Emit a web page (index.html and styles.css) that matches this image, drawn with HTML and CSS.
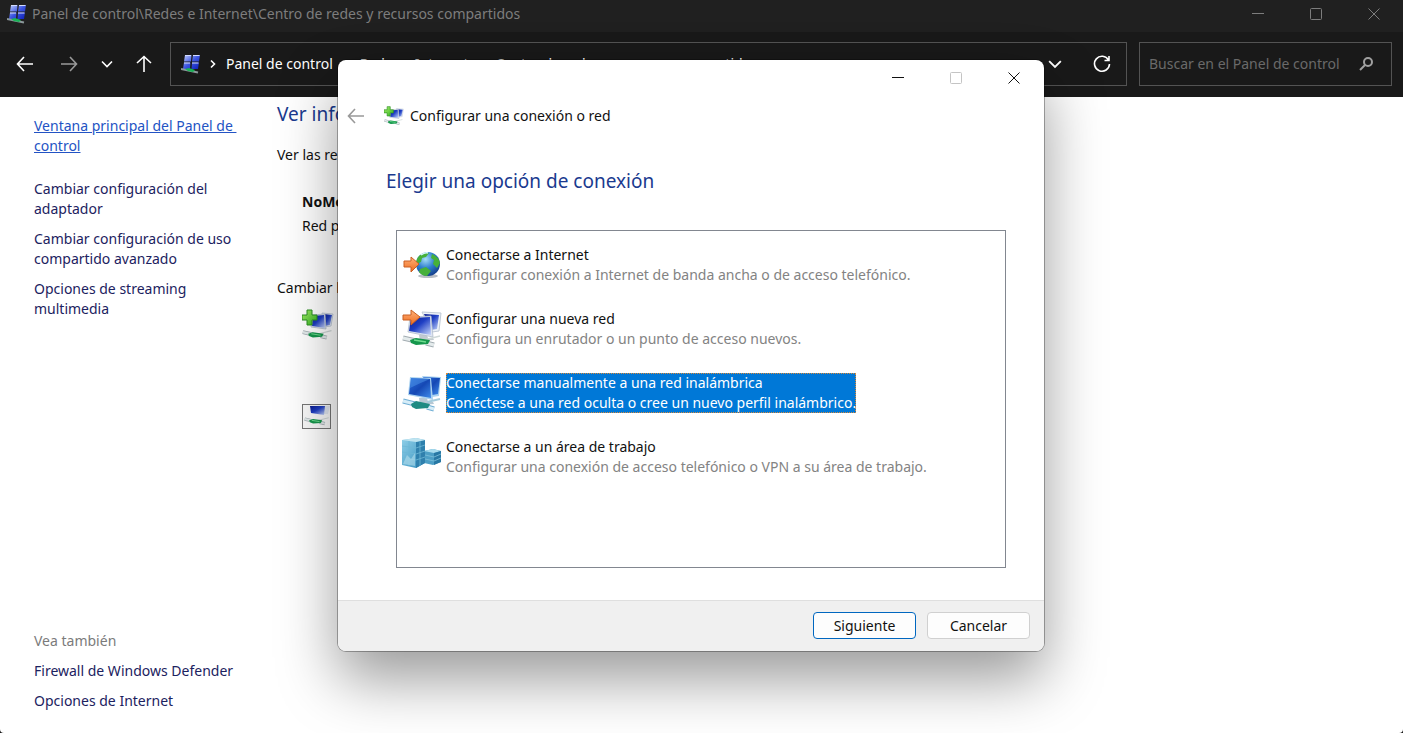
FILE: index.html
```html
<!DOCTYPE html>
<html lang="es">
<head>
<meta charset="utf-8">
<meta name="viewport" content="width=device-width, initial-scale=1">
<title>Centro de redes y recursos compartidos</title>
<link rel="stylesheet" href="styles.css">
</head>
<body>
<svg class="defs" width="0" height="0" aria-hidden="true">
  <defs>
    <linearGradient id="screen" x1="0" y1="0" x2="1" y2="1">
      <stop offset="0" stop-color="#0a1a8c"/><stop offset=".45" stop-color="#1f3fc4"/><stop offset="1" stop-color="#c9d8fb"/>
    </linearGradient>
    <linearGradient id="screen-flat" x1="0" y1="0" x2="1" y2="1">
      <stop offset="0" stop-color="#2c6fdc"/><stop offset=".5" stop-color="#1548b4"/><stop offset="1" stop-color="#3f8bea"/>
    </linearGradient>
    <linearGradient id="orange" x1="0" y1="0" x2="0" y2="1">
      <stop offset="0" stop-color="#ffb27a"/><stop offset="1" stop-color="#ee6a1c"/>
    </linearGradient>
    <linearGradient id="plus-fill" x1="0" y1="0" x2="1" y2="1">
      <stop offset="0" stop-color="#a8ef6c"/><stop offset="1" stop-color="#2fb21c"/>
    </linearGradient>
    <linearGradient id="pane" x1="0" y1="0" x2="1" y2="1">
      <stop offset="0" stop-color="#c4d2ff"/><stop offset=".5" stop-color="#3c55e0"/><stop offset="1" stop-color="#0a1cb4"/>
    </linearGradient>
    <radialGradient id="sea" cx=".4" cy=".3" r=".75">
      <stop offset="0" stop-color="#a5def8"/><stop offset=".5" stop-color="#2f7fd0"/><stop offset="1" stop-color="#123a86"/>
    </radialGradient>
    <linearGradient id="server" x1="0" y1="0" x2="1" y2="1">
      <stop offset="0" stop-color="#8fcfe8"/><stop offset="1" stop-color="#3590be"/>
    </linearGradient>
    <symbol id="cable" viewBox="0 0 40 14">
      <path d="M1 4 14 7 M24 9 32 11" stroke="#a3adb2" stroke-width="5"/>
      <path d="M1 4 14 7 M24 9 32 11" stroke="#e4ebec" stroke-width="3"/>
      <path d="M22 6 38 2" fill="none" stroke="#cfd8d8" stroke-width="1.5"/>
      <path d="M8 6 14 4 28 6 26 10 14 11 9 9z" fill="#15974c"/>
      <path d="M12 6 24 8" fill="none" stroke="#6fdc8f" stroke-width="1.500"/>
    </symbol>
    <symbol id="monitors" viewBox="0 0 40 40">
      <path d="M20 3 39 4 37 22 30 23z" fill="#edf2f8" stroke="#c0cad6"/>
      <path d="M22 5 37 6 35 20 29 21z" fill="url(#screen)"/>
      <path d="M17 26h8l1 3h5l1 2-14 1z" fill="#c2cad0"/>
      <path d="M8 8 29 7 31 28 6 23z" fill="#dfe6f2" stroke="#b0bccb" stroke-width=".8"/>
      <path d="M9 9 28 8 29 26 7 22z" fill="url(#screen)"/>
      <use href="#cable" x="0" y="25" width="40" height="14"/>
    </symbol>
    <symbol id="monitors-wireless" viewBox="0 0 40 40">
      <path d="M20 3 39 4 37 23 30 24z" fill="#a9d2f0"/>
      <path d="M21 4 38 5 36 21 30 22z" fill="url(#screen-flat)"/>
      <path d="M17 25h8l1 4h5l1 2-14 1z" fill="#b6c8d4"/>
      <path d="M8 4 29 5 31 27 6 22z" fill="#a9d2f0"/>
      <path d="M9 5 28 6 29 25 7 21z" fill="url(#screen-flat)"/>
      <path d="M9 5 28 6 Q18 10 8 15z" fill="#4f97ea" opacity=".5"/>
      <path d="M25 29 38 26" stroke="#a4cbdc" stroke-width="2"/>
      <path d="M1 28 13 31 M25 34 32 36" stroke="#6faed4" stroke-width="5"/>
      <path d="M1 28 13 31 M25 34 32 36" stroke="#d6edf8" stroke-width="3"/>
      <path d="M9 31 14 28 28 31 26 35 14 36 10 34z" fill="#1f8b83"/>
    </symbol>
    <symbol id="add-network" viewBox="0 0 32 32">
      <path d="M20 4 31 5 29 17 22 18z" fill="#edf2fa" stroke="#b8c4d4" stroke-width=".8"/>
      <path d="M22 5 30 6 28 16 23 17z" fill="url(#screen)"/>
      <path d="M10 6 23 5 24 20 9 18z" fill="#dfe6f2" stroke="#b0bccb" stroke-width=".8"/>
      <path d="M11 7 22 6 23 19 10 17z" fill="url(#screen)"/>
      <use href="#cable" x="0" y="20" width="31" height="11"/>
      <path d="M5 1h5v5h5v5h-5v5H5v-5H0V6h5z" fill="url(#plus-fill)" stroke="#2c8f22"/>
    </symbol>
    <symbol id="network-small" viewBox="0 0 20 20">
      <path d="M4 1H10.500L10 7.500H3z M12 1H19L18 7.500H11z M3 8.500H9.500L9 15H2z M11 8.500H18L17 15H10.500z" fill="url(#pane)"/>
      <path d="M4 1.500H10 M12 1.500H18.500 M3 9H9 M11 9H17.500" stroke="#d3dcff"/>
      <path d="M0 15 17 18.500" stroke="#8b989b" stroke-width="2"/>
      <path d="M4 15 8 14 14 16 12 18 7 17z" fill="#18b256"/>
    </symbol>
    <symbol id="globe" viewBox="0 0 40 40">
      <ellipse cx="26" cy="31" rx="10" ry="2" fill="#b9bec4"/>
      <circle cx="26" cy="19" r="12" fill="url(#sea)"/>
      <path d="M17 11q5-5 10-3l-3 4-4 1-1 4-5 2q0-5 3-8z M30 9q7 3 8 9l-3 5-4-4 1-4-3-2z M18 24l6-2 5 4-4 5q-5 0-8-4z" fill="#46b03a"/>
      <path d="M19 10q4-3 7-2" stroke="#d5f5ff" stroke-width="1.500" fill="none"/>
      <path d="M2 16h7v-4l8 7-8 8v-5H2z" fill="url(#orange)" stroke="#c95f22"/>
    </symbol>
    <symbol id="new-network" viewBox="0 0 40 40">
      <use href="#monitors" width="40" height="40"/>
      <path d="M1 6h8V1l9 7-9 8v-5H1z" fill="url(#orange)" stroke="#c95f22"/>
    </symbol>
    <symbol id="workplace" viewBox="0 0 40 40">
      <path d="M22 14 31 12 39 14 39 25 31 28 22 26z" fill="#4d9fc6"/>
      <path d="M22 14 31 12 39 14 32 16z" fill="#a8dcee"/>
      <path d="M32 16 39 14V25L32 28z" fill="#2878a4"/>
      <path d="M23 18 32 20 39 17 M23 22 32 24 39 21" fill="none" stroke="#7dc0da" stroke-width=".8"/>
      <path d="M0 3 14 1 23 3 23 26 14 31 0 28z" fill="url(#server)"/>
      <path d="M14 5 23 3V26L14 31z" fill="#2f80ad"/>
      <path d="M0 3 14 1 23 3 14 5z" fill="#bfe4f0"/>
      <path d="M0 9 14 11 23 8 M0 15 14 17 23 14 M0 21 14 23 23 20 M7 4V29 M18 4V29" fill="none" stroke="#6db8d6" stroke-width=".8"/>
      <path d="M1 27 5 18 9 22 13 16V29z" fill="#c5e8f2" opacity=".5"/>
    </symbol>
    <symbol id="arrow-left" viewBox="0 0 18 18"><path d="M17 9H1.500M8 2 1.500 9 8 16"/></symbol>
    <symbol id="chevron-down" viewBox="0 0 12 12"><path d="M1 3.500 6 8.500 11 3.500"/></symbol>
    <symbol id="chevron-right" viewBox="0 0 8 10"><path d="M2 1.500 5.500 5 2 8.500"/></symbol>
    <symbol id="minimize" viewBox="0 0 12 12"><path d="M0 5.500H12"/></symbol>
    <symbol id="maximize" viewBox="0 0 12 12"><rect x=".5" y=".5" width="11" height="11" rx="1"/></symbol>
    <symbol id="close" viewBox="0 0 12 12"><path d="M.5.500 11.500 11.500M11.500.500.500 11.500"/></symbol>
  </defs>
</svg>

<div class="window">
  <header class="titlebar">
    <svg class="icon-small"><use href="#network-small"/></svg>
    <span class="titlebar-text">Panel de control\Redes e Internet\Centro de redes y recursos compartidos</span>
    <div class="caption">
      <button type="button" aria-label="Minimizar"><svg class="line glyph"><use href="#minimize"/></svg></button>
      <button type="button" aria-label="Maximizar"><svg class="line glyph"><use href="#maximize"/></svg></button>
      <button type="button" aria-label="Cerrar"><svg class="line glyph"><use href="#close"/></svg></button>
    </div>
  </header>

  <nav class="toolbar" aria-label="Navegación">
    <div class="nav-buttons">
      <button type="button" aria-label="Atrás"><svg class="line arrow"><use href="#arrow-left"/></svg></button>
      <button type="button" class="dim" aria-label="Adelante"><svg class="line arrow forward"><use href="#arrow-left"/></svg></button>
      <button type="button" aria-label="Recientes"><svg class="line glyph bold"><use href="#chevron-down"/></svg></button>
      <button type="button" aria-label="Subir"><svg class="line arrow up"><use href="#arrow-left"/></svg></button>
    </div>
    <div class="address">
      <svg class="icon-small"><use href="#network-small"/></svg>
      <svg class="line crumb-sep"><use href="#chevron-right"/></svg>
      <a href="#">Panel de control</a>
      <svg class="line crumb-sep"><use href="#chevron-right"/></svg>
      <a href="#">Redes e Internet</a>
      <svg class="line crumb-sep"><use href="#chevron-right"/></svg>
      <a href="#">Centro de redes y recursos compartidos</a>
      <div class="address-actions">
        <button type="button" aria-label="Ubicaciones anteriores"><svg class="line chevron-wide bold"><use href="#chevron-down"/></svg></button>
        <button type="button" aria-label="Actualizar"><svg class="line arrow" viewBox="0 0 18 18"><path d="M15.500 5A7.500 7.500 0 1 0 16.500 9M16 1V5.500H11.500"/></svg></button>
      </div>
    </div>
    <div class="search">
      <input type="search" aria-label="Buscar en el Panel de control" placeholder="Buscar en el Panel de control">
      <svg class="line search-icon" viewBox="0 0 14 14"><circle cx="9" cy="5" r="4"/><path d="M6 8 1 13"/></svg>
    </div>
  </nav>

  <div class="content">
    <aside class="sidebar">
      <a class="home" href="#">Ventana principal del Panel de&nbsp;<br>control</a>
      <div class="links">
        <a href="#">Cambiar configuración del adaptador</a>
        <a href="#">Cambiar configuración de uso compartido avanzado</a>
        <a href="#">Opciones de streaming multimedia</a>
      </div>
      <div class="links see-also">
        <span class="muted">Vea también</span>
        <a href="#">Firewall de Windows Defender</a>
        <a href="#">Opciones de Internet</a>
      </div>
    </aside>
    <main class="main">
      <h1>Ver información</h1>
      <p>Ver las redes activas</p>
      <div class="network">
        <strong>NoMeConectes</strong>
        <span>Red privada</span>
      </div>
      <p>Cambiar la configuración de red</p>
      <div class="tasks">
        <svg class="task-icon"><use href="#add-network"/></svg>
        <svg class="task-icon" viewBox="0 0 32 32"><rect x=".5" y="3.500" width="28" height="24" fill="#fafafa" stroke="#777"/><path d="M20 5H28L26 13H21z" fill="#e2e8f2"/><path d="M8 5H23L22 14 9 12z" fill="url(#screen)"/><use href="#cable" x="2" y="15" width="26" height="10"/></svg>
      </div>
    </main>
  </div>
</div>

<section class="dialog" role="dialog" aria-labelledby="dialog-title">
  <div class="caption dialog-caption">
    <button type="button" aria-label="Minimizar"><svg class="line glyph"><use href="#minimize"/></svg></button>
    <button type="button" aria-label="Maximizar" disabled><svg class="line glyph"><use href="#maximize"/></svg></button>
    <button type="button" aria-label="Cerrar"><svg class="line glyph"><use href="#close"/></svg></button>
  </div>
  <header class="dialog-header">
    <button type="button" class="back" aria-label="Atrás" disabled><svg class="line arrow"><use href="#arrow-left"/></svg></button>
    <svg class="icon-small"><use href="#add-network"/></svg>
    <span id="dialog-title">Configurar una conexión o red</span>
  </header>
  <div class="dialog-body">
    <h2>Elegir una opción de conexión</h2>
    <ul class="options">
      <li><button type="button" class="option"><svg class="option-icon"><use href="#globe"/></svg><span class="option-text">Conectarse a Internet<small>Configurar conexión a Internet de banda ancha o de acceso telefónico.</small></span></button></li>
      <li><button type="button" class="option"><svg class="option-icon"><use href="#new-network"/></svg><span class="option-text">Configurar una nueva red<small>Configura un enrutador o un punto de acceso nuevos.</small></span></button></li>
      <li><button type="button" class="option selected" aria-pressed="true"><svg class="option-icon"><use href="#monitors-wireless"/></svg><span class="option-text">Conectarse manualmente a una red inalámbrica<small>Conéctese a una red oculta o cree un nuevo perfil inalámbrico.</small></span></button></li>
      <li><button type="button" class="option"><svg class="option-icon"><use href="#workplace"/></svg><span class="option-text">Conectarse a un área de trabajo<small>Configurar una conexión de acceso telefónico o VPN a su área de trabajo.</small></span></button></li>
    </ul>
  </div>
  <footer class="dialog-footer">
    <button type="button" class="push primary">Siguiente</button>
    <button type="button" class="push">Cancelar</button>
  </footer>
</section>
</body>
</html>
```
FILE: styles.css
```css
* { box-sizing: border-box; }

body {
  margin: 0;
  min-height: 100vh;
  background: #191919;
  color: #111;
  font: 14px/20px "Noto Sans", "Open Sans", sans-serif;
  overflow: hidden;
}

button {
  margin: 0;
  padding: 0;
  border: 0;
  background: none;
  color: inherit;
  font: inherit;
}

a { color: inherit; text-decoration: none; }
h1, h2, p, ul { margin: 0; padding: 0; font-weight: 400; }
ul { list-style: none; }
svg { display: block; flex: none; }

.defs { position: absolute; }
.line { fill: none; stroke: currentColor; stroke-width: 1; }
.glyph { width: 12px; height: 12px; }
.bold { stroke-width: 1.6; }
.arrow { width: 18px; height: 18px; stroke-width: 1.6; }
.forward { transform: rotate(180deg); }
.up { transform: rotate(90deg); }
.icon-small { width: 20px; height: 20px; }

.window {
  display: flex;
  flex-direction: column;
  min-height: 100vh;
}

.titlebar {
  display: flex;
  align-items: center;
  height: 32px;
  padding: 0 0 5px 7px;
  background: #202020;
  color: #7d7d7d;
}
.titlebar-text { flex: 1; padding-left: 5px; }

.caption { display: flex; }
.caption button {
  display: flex;
  align-items: center;
  justify-content: center;
  width: 58px;
  height: 27px;
}

.toolbar {
  display: flex;
  align-items: center;
  gap: 12px;
  height: 65px;
  padding: 0 11px 2px 16px;
  color: #fff;
}
.nav-buttons { display: flex; width: 142px; justify-content: space-between; padding-right: 5px; }
.nav-buttons button { display: flex; align-items: center; }
.nav-buttons .dim { padding-left: 4px; color: #999; }

.address, .search {
  display: flex;
  align-items: center;
  height: 44px;
  border: 1px solid #535353;
}
.address { flex: 1; padding: 0 15px 0 10px; }
.address a { padding-right: 2px; }
.crumb-sep { width: 8px; height: 10px; margin: 0 9px 0 8px; stroke-width: 1.6; }
.address-actions { display: flex; gap: 31px; margin-left: auto; }
.address-actions button { display: flex; align-items: center; }
.chevron-wide { width: 14px; height: 14px; }

.search { width: 253px; padding: 0 18px 0 9px; color: #a0a0a0; }
.search input {
  flex: 1;
  min-width: 0;
  padding: 0;
  border: 0;
  outline: 0;
  background: none;
  color: #fff;
  font: inherit;
}
.search input::placeholder { color: #6a6a6a; opacity: 1; }
.search-icon { width: 14px; height: 14px; stroke-width: 2; }

.content {
  display: flex;
  flex: 1;
  background: #fff;
  border-radius: 0 0 4px 4px;
}
.sidebar {
  display: flex;
  flex-direction: column;
  width: 277px;
  padding: 19px 36px 22px 34px;
  color: #1c2260;
}
.home { color: #2353c4; text-decoration: underline; white-space: nowrap; }
.links { display: flex; flex-direction: column; gap: 10px; padding-top: 23px; }
.see-also { margin-top: auto; }
.muted { color: #7b7b7b; }

.main { padding-top: 5px; white-space: nowrap; }
.main h1, .dialog h2 { color: #1a3a8f; font-size: 19px; line-height: 24px; }
.main h1 { padding-bottom: 19px; }
.network {
  display: flex;
  flex-direction: column;
  gap: 4px;
  padding: 27px 0 42px 25px;
}
.tasks { display: flex; flex-direction: column; gap: 60px; padding: 11px 0 0 25px; }
.task-icon { width: 32px; height: 32px; }

.dialog {
  position: absolute;
  top: 60px;
  left: 338px;
  display: flex;
  flex-direction: column;
  width: 706px;
  background: #fff;
  border-radius: 8px;
  box-shadow: 0 0 0 1px rgba(0, 0, 0, .3), 0 28px 60px rgba(0, 0, 0, .4);
  overflow: hidden;
}
.dialog-caption { justify-content: flex-end; padding: 4px 1px 0 0; }
.dialog-caption button:disabled { color: #c4c4c4; }
.dialog-caption button { height: 28px; }
.dialog-header { display: flex; align-items: center; padding: 14px 9px 0; }
.dialog-header .icon-small { margin: 0 6px 0 19px; }
.back { color: #999; }
.dialog-body { padding: 43px 38px 32px 48px; }
.options {
  display: flex;
  flex-direction: column;
  gap: 24px;
  min-height: 338px;
  margin: 37px 0 0 10px;
  padding: 14px 5px;
  border: 1px solid #828790;
}
.option { display: flex; gap: 4px; text-align: left; white-space: nowrap; }
.option-icon { width: 40px; height: 40px; }
.option-text small { display: block; color: #838383; font-size: inherit; }
.selected .option-text {
  background: #0078d7;
  color: #fff;
  outline: 1px dotted #d98a3a;
  outline-offset: -1px;
}
.selected .option-text small { color: inherit; }

.dialog-footer {
  display: flex;
  justify-content: flex-end;
  gap: 11px;
  padding: 11px 14px 12px;
  border-top: 1px solid #dfdfdf;
  background: #f0f0f0;
}
.push {
  width: 103px;
  height: 27px;
  border: 1px solid #d0d0d0;
  border-radius: 4px;
  background: #fdfdfd;
}
.primary { border-color: #0067c0; }
```
